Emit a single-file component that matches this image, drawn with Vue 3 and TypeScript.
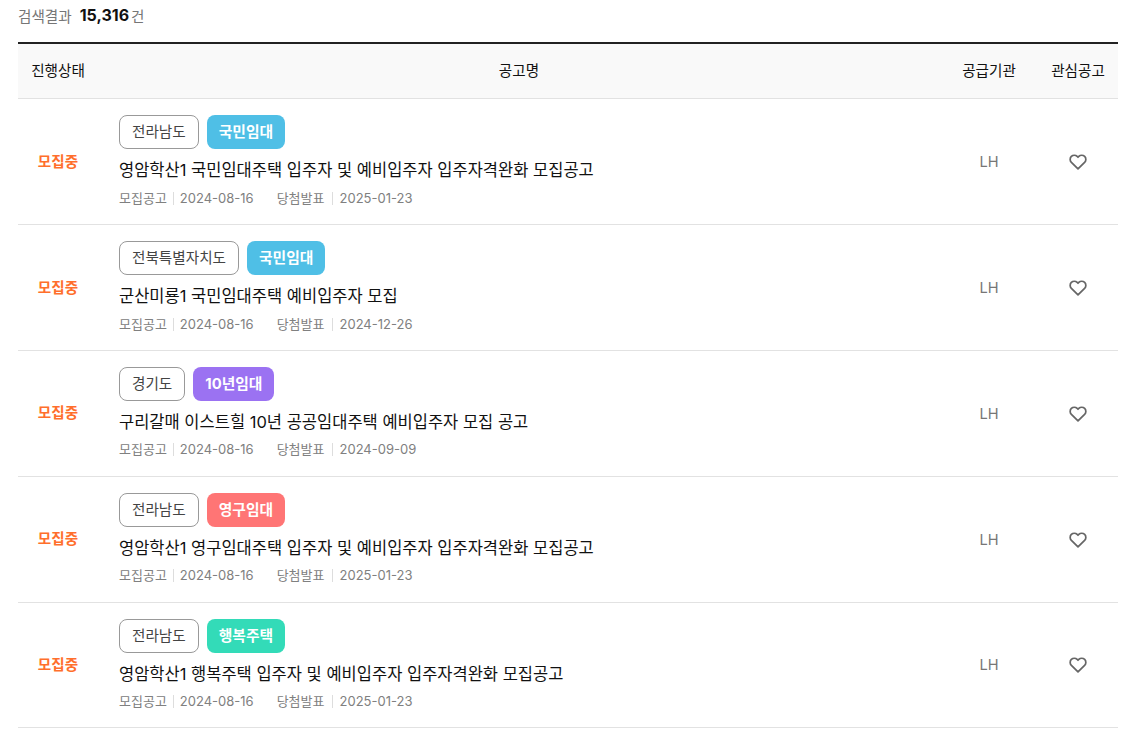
<script setup lang="ts">
interface Notice {
  region: string;
  type: string;
  typeClass: string;
  title: string;
  announced: string;
  winner: string;
}

const notices: Notice[] = [
  { region: '전라남도', type: '국민임대', typeClass: 'sky', title: '영암학산1 국민임대주택 입주자 및 예비입주자 입주자격완화 모집공고', announced: '2024-08-16', winner: '2025-01-23' },
  { region: '전북특별자치도', type: '국민임대', typeClass: 'sky', title: '군산미룡1 국민임대주택 예비입주자 모집', announced: '2024-08-16', winner: '2024-12-26' },
  { region: '경기도', type: '10년임대', typeClass: 'purple', title: '구리갈매 이스트힐 10년 공공임대주택 예비입주자 모집 공고', announced: '2024-08-16', winner: '2024-09-09' },
  { region: '전라남도', type: '영구임대', typeClass: 'red', title: '영암학산1 영구임대주택 입주자 및 예비입주자 입주자격완화 모집공고', announced: '2024-08-16', winner: '2025-01-23' },
  { region: '전라남도', type: '행복주택', typeClass: 'mint', title: '영암학산1 행복주택 입주자 및 예비입주자 입주자격완화 모집공고', announced: '2024-08-16', winner: '2025-01-23' },
];
</script>

<template>
  <div class="page">
    <div class="result">
      <span class="result-label">검색결과</span>
      <strong class="result-count">15,316</strong>
      <span class="result-unit">건</span>
    </div>

    <div class="table">
      <div class="row head">
        <div>진행상태</div>
        <div>공고명</div>
        <div>공급기관</div>
        <div>관심공고</div>
      </div>

      <div v-for="(item, i) in notices" :key="i" class="row body">
        <div class="status">모집중</div>
        <div class="info">
          <div class="tags">
            <span class="tag region">{{ item.region }}</span>
            <span class="tag type" :class="item.typeClass">{{ item.type }}</span>
          </div>
          <div class="title">{{ item.title }}</div>
          <div class="meta">
            <span class="meta-label">모집공고</span>
            <span class="meta-date">{{ item.announced }}</span>
            <span class="meta-label second">당첨발표</span>
            <span class="meta-date">{{ item.winner }}</span>
          </div>
        </div>
        <div class="org">LH</div>
        <div class="fav">
          <svg width="18" height="18" viewBox="0 0 24 24" fill="none" stroke="#666" stroke-width="2.3" stroke-linejoin="round">
            <path d="M20.84 4.61a5.5 5.5 0 0 0-7.78 0L12 5.67l-1.06-1.06a5.5 5.5 0 0 0-7.78 7.78l1.06 1.06L12 21.23l7.78-7.78 1.06-1.06a5.5 5.5 0 0 0 0-7.78z" />
          </svg>
        </div>
      </div>
    </div>
  </div>
</template>

<style>
html,
body {
  margin: 0;
  background: #fff;
  overflow: hidden;
}
</style>

<style scoped>
.page {
  width: 1100px;
  padding: 0 15px 0 18px;
  font-family: Inter, 'Noto Sans CJK KR', sans-serif;
  color: #111;
}

.result {
  display: flex;
  align-items: center;
  height: 30px;
  margin-bottom: 12px;
  font-size: 14.6px;
  color: #767676;
}

.result-count {
  margin: 0 2px 0 8px;
  font-size: 16px;
  font-weight: 700;
  color: #111;
}

.table {
  border-top: 2px solid #222;
}

.row {
  display: grid;
  grid-template-columns: 80px 1fr 98px 80px;
  align-items: center;
  box-sizing: border-box;
  border-bottom: 1px solid #e2e2e2;
}

.head {
  height: 55.4px;
  padding-bottom: 4px;
  background: #f9f9f9;
  text-align: center;
  font-size: 14.6px;
}

.body {
  height: 125.8px;
}

.status {
  padding-bottom: 3px;
  text-align: center;
  font-size: 14.6px;
  font-weight: 700;
  color: #ff6f2c;
}

.info {
  align-self: start;
  padding: 16px 0 0 21px;
}

.tags {
  display: flex;
  gap: 8px;
}

.tag {
  display: flex;
  align-items: center;
  height: 34px;
  box-sizing: border-box;
  padding: 0 12px 3px;
  border-radius: 8px;
  font-size: 14.6px;
}

.region {
  border: 1px solid #999;
  color: #444;
}

.type {
  color: #fff;
  font-size: 14.8px;
  font-weight: 700;
}

.sky {
  background: #4fbfe6;
}

.purple {
  background: #9b72f2;
}

.red {
  background: #ff7575;
}

.mint {
  background: #33dbb8;
}

.title {
  margin-top: 9px;
  font-size: 16.5px;
  line-height: 24px;
}

.meta {
  display: flex;
  align-items: center;
  margin-top: 5.5px;
  font-size: 13px;
  line-height: 20px;
  color: #808080;
}

.meta-label {
  position: relative;
  padding-right: 13px;
}

.meta-label::after {
  content: '';
  position: absolute;
  right: 6px;
  top: 4px;
  width: 1px;
  height: 13px;
  background: #ddd;
}

.meta-label.second {
  margin-left: 23px;
  padding-right: 15px;
}

.meta-label.second::after {
  right: 7px;
}

.org {
  padding-top: 1px;
  text-align: center;
  font-size: 14.6px;
  font-weight: 400;
  color: #767676;
}

.fav {
  display: flex;
  justify-content: center;
  padding-top: 1px;
}
</style>
